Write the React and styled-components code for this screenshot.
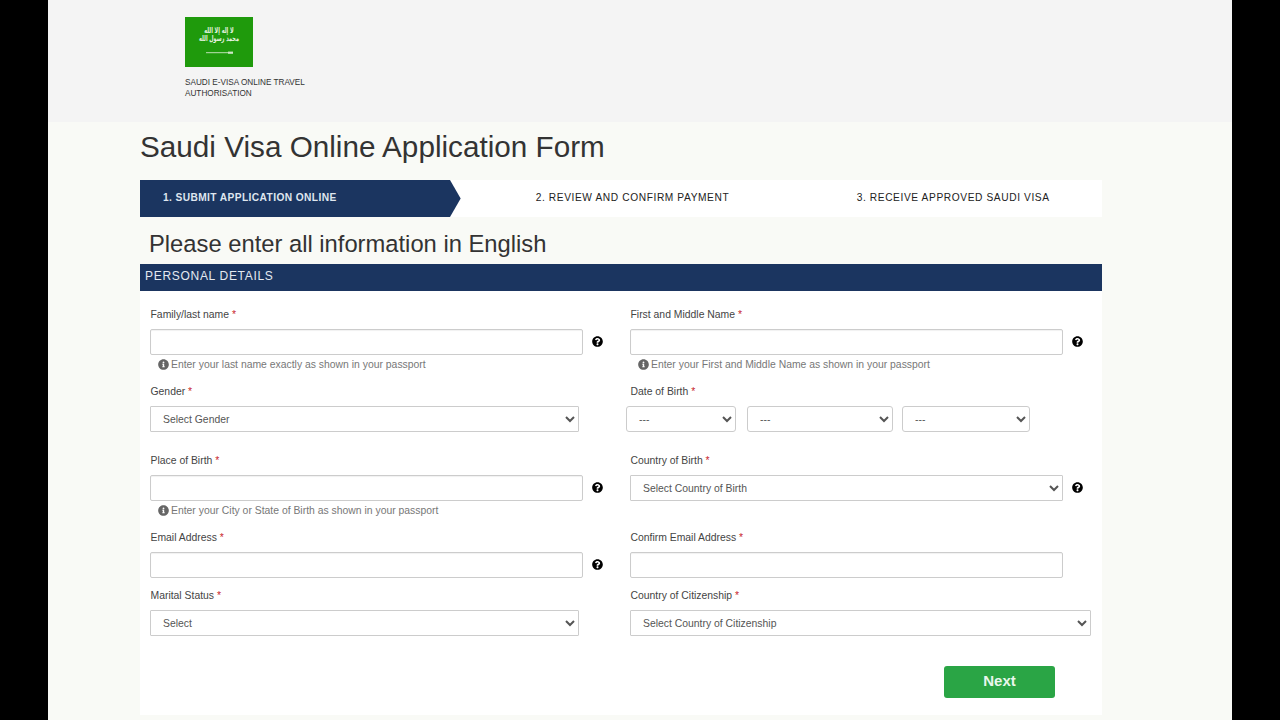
import React from 'react'
import styled, { createGlobalStyle } from 'styled-components'
import { FaQuestionCircle, FaInfoCircle } from 'react-icons/fa'

const GlobalStyle = createGlobalStyle`
  html, body {
    margin: 0;
    padding: 0;
    background: #000;
  }
  * {
    box-sizing: border-box;
  }
`
const Page = styled.div`
  width: 1280px;
  height: 720px;
  overflow: hidden;
  padding: 0 48px;
  background: #000;
  font-family: 'Liberation Sans', Arial, sans-serif;
`
const Sheet = styled.div`
  height: 100%;
  background: #f9faf6;
`
const Header = styled.header`
  height: 122px;
  padding: 17px 0 0 137px;
  background: #f4f4f4;
`
const Flag = styled.svg`
  display: block;
  width: 68px;
  height: 50px;
`
const Brand = styled.div`
  width: 130px;
  margin-top: 10px;
  font-size: 8.2px;
  line-height: 11px;
  color: #333;
`
const Main = styled.main`
  width: 962px;
  margin-left: 92px;
`
const Title = styled.h1`
  margin: 0;
  padding-top: 7px;
  height: 58px;
  font-size: 29.7px;
  line-height: 36px;
  font-weight: 400;
  color: #333;
`
const Steps = styled.div`
  display: grid;
  grid-template-columns: repeat(3, 1fr);
  height: 37px;
  background: #fff;
`
const Step = styled.div`
  display: flex;
  align-items: center;
  justify-content: ${(p) => (p.$active ? 'flex-start' : 'center')};
  padding: 0 0 2px 23px;
  font-size: 10.2px;
  letter-spacing: ${(p) => (p.$active ? 0.4 : 0.6)}px;
  white-space: nowrap;
  font-weight: ${(p) => (p.$active ? 700 : 400)};
  color: ${(p) => (p.$active ? '#dfe6ef' : '#222')};
  background: ${(p) => (p.$active ? '#1b3560' : 'transparent')};
  clip-path: ${(p) =>
    p.$active ? 'polygon(0 0, 310px 0, 100% 50%, 310px 100%, 0 100%)' : 'none'};
`
const Notice = styled.h2`
  margin: 0;
  height: 47px;
  padding: 13px 0 0 9px;
  font-size: 23.75px;
  line-height: 28px;
  font-weight: 400;
  color: #333;
`
const SectionBar = styled.div`
  height: 27px;
  padding-left: 5px;
  font-size: 12px;
  line-height: 25px;
  letter-spacing: 0.7px;
  color: #e4e9f0;
  background: #1b3560;
`
const Card = styled.form`
  height: 424px;
  padding: 15px 0 0 10px;
  background: #fff;
`
const FormGrid = styled.div`
  display: grid;
  grid-template-columns: 480px 472px;
  row-gap: 7px;
`
const Field = styled.div`
  padding-bottom: ${(p) => p.$spaced || 0}px;
`
const Label = styled.label`
  display: block;
  height: 18px;
  margin-bottom: 5px;
  padding-left: 0.5px;
  font-size: 10.4px;
  line-height: 18px;
  color: #444;
`
const Required = styled.span`
  color: #c8242b;
`
const ControlRow = styled.div`
  display: flex;
  align-items: center;
  gap: 9px;
  height: 26px;
`
const TextInput = styled.input`
  width: 433px;
  height: 26px;
  padding: 0 12px;
  background: #fff;
  border: 1px solid #ccc;
  border-radius: 2px;
  box-shadow: inset 0 1px 1px rgba(0, 0, 0, 0.06);
  outline: none;
`
const Select = styled.select`
  flex: none;
  width: ${(p) => p.$width}px;
  height: 26px;
  padding: 0 8px;
  background-color: #fff;
  border: 1px solid #ccc;
  border-radius: ${(p) => (p.$round ? 3 : 1)}px;
  font-family: inherit;
  font-size: 10.4px;
  color: #555;
`
const HelpIcon = styled(FaQuestionCircle)`
  flex: none;
  width: 11px;
  height: 11px;
  margin-bottom: 2px;
  color: #000;
`
const Hint = styled.div`
  display: flex;
  align-items: center;
  gap: 2px;
  height: 21px;
  padding: 0 0 2px 8px;
  font-size: 10.4px;
  color: #777;
`
const HintIcon = styled(FaInfoCircle)`
  width: 11px;
  height: 11px;
  color: #666;
`
const DateRow = styled.div`
  display: grid;
  grid-template-columns: 121px 155px 128px;
  height: 26px;
  margin-left: -4px;
`
const Actions = styled.div`
  display: flex;
  justify-content: flex-end;
  margin-top: 30px;
  padding-right: 47px;
`
const NextButton = styled.button`
  width: 111px;
  height: 32px;
  padding-bottom: 4px;
  border: none;
  border-radius: 3px;
  background: #2aa545;
  color: #e9f7ec;
  font-family: inherit;
  font-size: 15px;
  font-weight: 700;
`

const SaudiFlag = () => (
  <Flag viewBox="0 0 68 50">
    <rect width="68" height="50" fill="#1f9a0c" />
    <g transform="translate(34 0) scale(0.62 1)">
      <text
        textAnchor="middle"
        fontFamily="'DejaVu Sans', sans-serif"
        fontSize="8"
        fontWeight="700"
        fill="#e6f3e0"
      >
        <tspan x="0" y="16">لا إله إلا الله</tspan>
        <tspan x="0" y="24.5">محمد رسول الله</tspan>
      </text>
    </g>
    <path d="M21 35.7h22" stroke="#e6f3e0" strokeWidth="0.8" />
    <path d="M43 34.6h5v2.2h-5z" fill="#cfe6c8" />
  </Flag>
)

const FieldLabel = ({ children }) => (
  <Label>
    {children} <Required>*</Required>
  </Label>
)

const InputField = ({ label, hint, help = true, spaced }) => (
  <Field $spaced={spaced}>
    <FieldLabel>{label}</FieldLabel>
    <ControlRow>
      <TextInput type="text" />
      {help && <HelpIcon />}
    </ControlRow>
    {hint && (
      <Hint>
        <HintIcon />
        {hint}
      </Hint>
    )}
  </Field>
)

const SelectField = ({ label, placeholder, width, help, spaced }) => (
  <Field $spaced={spaced}>
    <FieldLabel>{label}</FieldLabel>
    <ControlRow>
      <Select $width={width}>
        <option>{placeholder}</option>
      </Select>
      {help && <HelpIcon />}
    </ControlRow>
  </Field>
)

const App = () => {
  return (
    <Page>
      <GlobalStyle />
      <Sheet>
        <Header>
          <SaudiFlag />
          <Brand>SAUDI E-VISA ONLINE TRAVEL AUTHORISATION</Brand>
        </Header>
        <Main>
          <Title>Saudi Visa Online Application Form</Title>
          <Steps>
            <Step $active>1. SUBMIT APPLICATION ONLINE</Step>
            <Step>2. REVIEW AND CONFIRM PAYMENT</Step>
            <Step>3. RECEIVE APPROVED SAUDI VISA</Step>
          </Steps>
          <Notice>Please enter all information in English</Notice>
          <SectionBar>PERSONAL DETAILS</SectionBar>
          <Card>
            <FormGrid>
              <InputField
                label="Family/last name"
                hint="Enter your last name exactly as shown in your passport"
              />
              <InputField
                label="First and Middle Name"
                hint="Enter your First and Middle Name as shown in your passport"
              />
              <SelectField
                label="Gender"
                placeholder="Select Gender"
                width={429}
                spaced={13}
              />
              <Field $spaced={13}>
                <FieldLabel>Date of Birth</FieldLabel>
                <DateRow>
                  <Select $width={110} $round>
                    <option>---</option>
                  </Select>
                  <Select $width={146} $round>
                    <option>---</option>
                  </Select>
                  <Select $width={128} $round>
                    <option>---</option>
                  </Select>
                </DateRow>
              </Field>
              <InputField
                label="Place of Birth"
                hint="Enter your City or State of Birth as shown in your passport"
              />
              <SelectField
                label="Country of Birth"
                placeholder="Select Country of Birth"
                width={433}
                help
              />
              <InputField label="Email Address" spaced={2} />
              <InputField label="Confirm Email Address" help={false} spaced={2} />
              <SelectField
                label="Marital Status"
                placeholder="Select"
                width={429}
              />
              <SelectField
                label="Country of Citizenship"
                placeholder="Select Country of Citizenship"
                width={461}
              />
            </FormGrid>
            <Actions>
              <NextButton type="button">Next</NextButton>
            </Actions>
          </Card>
        </Main>
      </Sheet>
    </Page>
  )
}

export default App
